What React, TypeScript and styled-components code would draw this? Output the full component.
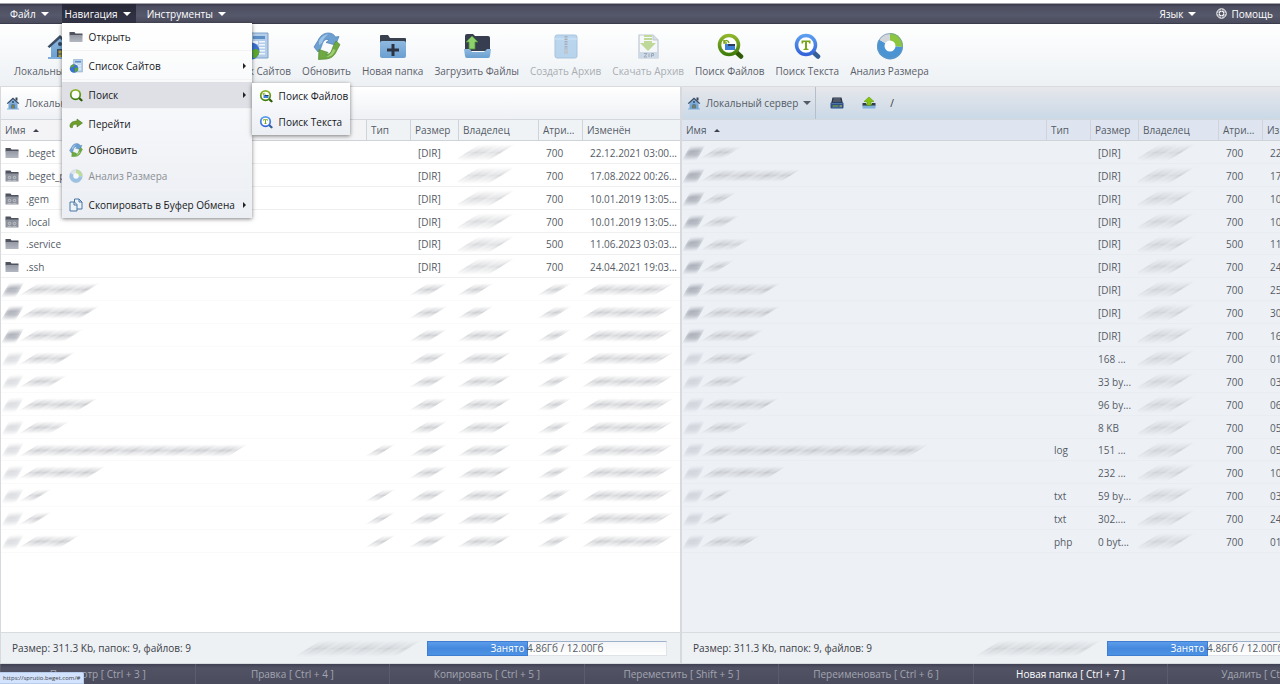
import React from 'react';
import styled, { createGlobalStyle, css } from 'styled-components';

const GlobalStyle = createGlobalStyle`
  *, *::before, *::after { box-sizing: border-box; }
  html, body { margin: 0; padding: 0; }
  body {
    background: #fff;
    font-family: "Open Sans", "Noto Sans", sans-serif;
    font-size: 10px;
    line-height: 14px;
    color: #555b66;
  }
  button {
    font: inherit;
    color: inherit;
    background: none;
    border: 0;
    margin: 0;
    padding: 0;
    cursor: pointer;
  }
  svg { display: block; flex: none; }
`;

/* ---------- page frame ---------- */

const Page = styled.div`
  display: flex;
  flex-direction: column;
  height: 100vh;
  padding-top: 3px;
  overflow: hidden;
`;

const MenuBar = styled.nav`
  display: flex;
  flex: none;
  gap: 8px;
  height: 21px;
  padding: 0 7px;
  border-top: 1px solid #a2a3aa;
  border-bottom: 1px solid #3a3c4c;
  background: linear-gradient(#373949, #4d4f61 15%, #55576a 60%, #4b4d5e);
  color: #fff;
`;

const MenuSlot = styled.div<{ $end?: boolean }>`
  position: relative;
  display: flex;
  margin-left: ${(p) => (p.$end ? 'auto' : '0')};
`;

const MenuButton = styled.button<{ $open?: boolean }>`
  display: flex;
  align-items: center;
  gap: 5px;
  height: 100%;
  padding: 0 5px 0 3px;
  white-space: nowrap;
  background: ${(p) => (p.$open ? 'linear-gradient(#262837, #343648)' : 'none')};
`;

const HelpLink = styled.a`
  display: flex;
  align-items: center;
  gap: 4px;
  margin-left: 7px;
  color: #fff;
  text-decoration: none;
`;

const Caret = styled.span<{ $dir?: 'up' | 'right' }>`
  width: 0;
  height: 0;
  ${(p) =>
    p.$dir === 'right'
      ? css`
          border-top: 3px solid transparent;
          border-bottom: 3px solid transparent;
          border-left: 3px solid #222;
        `
      : p.$dir === 'up'
        ? css`
            border-left: 3px solid transparent;
            border-right: 3px solid transparent;
            border-bottom: 3px solid #3e414d;
          `
        : css`
            border-left: 4px solid transparent;
            border-right: 4px solid transparent;
            border-top: 4px solid currentColor;
          `}
`;

/* ---------- drop-down menus ---------- */

const menuSurface = css`
  position: absolute;
  z-index: 5;
  margin: 0;
  padding: 0;
  list-style: none;
  background: linear-gradient(#fff, #ebeef3);
  box-shadow: 0 1px 4px rgba(0, 0, 0, 0.5);
`;

const Menu = styled.ul`
  ${menuSurface}
  top: 19px;
  left: 0;
  width: 190px;
  padding: 1px 0 0;
`;

const SubMenu = styled.ul`
  ${menuSurface}
  top: 3px;
  left: 100%;
  width: 98px;
`;

const MenuEntry = styled.li<{ $group?: boolean }>`
  position: relative;
  ${(p) => p.$group && 'border-top: 1px solid #f1f3f5; padding-top: 2px;'}
`;

const MenuItem = styled.button<{ $active?: boolean; $muted?: boolean }>`
  display: flex;
  align-items: center;
  gap: 6px;
  width: 100%;
  height: 26px;
  padding: 0 6px 0 7px;
  color: ${(p) => (p.$muted ? '#8b8f95' : '#16181c')};
  background: ${(p) => (p.$active ? '#dfe0e5' : 'none')};
  text-align: left;
  white-space: nowrap;
  > span:last-child { margin-left: auto; }
  > span:nth-child(2) { margin-left: 0; }
`;

const MenuIcon = styled.svg<{ $faded?: boolean }>`
  width: 14px;
  height: 14px;
  opacity: ${(p) => (p.$faded ? 0.5 : 1)};
`;

/* ---------- toolbar ---------- */

const Toolbar = styled.div`
  display: flex;
  flex: none;
  gap: 11px;
  height: 63px;
  padding-left: 14px;
  background: linear-gradient(#fff, #edf1f4);
  border-bottom: 1px solid #d9dbde;
`;

const ServerGroup = styled.div`
  display: flex;
  flex: 0 0 194px;
`;

const Tool = styled.button`
  display: flex;
  flex-direction: column;
  align-items: center;
  gap: 4px;
  padding-top: 8px;
  color: #5b606b;
  white-space: nowrap;
  &:disabled { color: #a9adb3; }
  &:disabled svg { opacity: 0.5; }
`;

const ToolIcon = styled.svg`
  width: 28px;
  height: 28px;
`;

/* ---------- file panes ---------- */

const Workspace = styled.main`
  display: flex;
  flex: 1;
  min-height: 0;
`;

const Pane = styled.section<{ $inactive?: boolean }>`
  display: flex;
  flex: 0 0 53.125%;
  flex-direction: column;
  min-width: 0;
  border-left: ${(p) => (p.$inactive ? '2px' : '1px')} solid #d8d9dc;
  background: ${(p) => (p.$inactive ? '#edf1f6' : '#fff')};
`;

const AddressBar = styled.div<{ $inactive?: boolean }>`
  display: flex;
  flex: none;
  align-items: center;
  height: 33px;
  border-bottom: 1px solid #d4d8dd;
  background: ${(p) =>
    p.$inactive ? 'linear-gradient(#e6e7eb, #cad9e7)' : 'linear-gradient(#fff, #eef1f5)'};
`;

const ServerPicker = styled.button`
  display: flex;
  align-items: center;
  gap: 5px;
  height: 100%;
  padding: 0 4px 0 5px;
  border-right: 1px solid #b5bfca;
  white-space: nowrap;
`;

const AddressActions = styled.div`
  display: flex;
  align-items: center;
  gap: 18px;
  padding-left: 14px;
`;

const PathText = styled.span`
  padding-left: 14px;
  color: #333;
`;

const ListArea = styled.div`
  flex: 1;
  min-height: 0;
  overflow: hidden;
`;

const FileTable = styled.table`
  width: 100%;
  table-layout: fixed;
  border-collapse: separate;
  border-spacing: 0;
`;

const Col = styled.col<{ $w?: number }>`
  width: ${(p) => (p.$w ? `${p.$w}px` : 'auto')};
`;

const HeadCell = styled.th<{ $inactive?: boolean; $sorted?: boolean }>`
  height: 21px;
  padding: 0 0 0 4px;
  border-bottom: 1px solid #d0d4d9;
  border-left: ${(p) => (p.$sorted ? '0' : '1px solid #d0d4d9')};
  background: ${(p) => (p.$inactive ? '#dee5f0' : p.$sorted ? '#f4f4f6' : '#eff3f6')};
  font-weight: 400;
  text-align: left;
  white-space: nowrap;
`;

const SortButton = styled.button`
  display: flex;
  align-items: center;
  gap: 8px;
`;

const Row = styled.tr<{ $line: string }>`
  height: 23px;
  &:nth-child(9n + 5) { height: 22px; }
  > td { border-bottom: 1px solid ${(p) => p.$line}; }
`;

const Cell = styled.td`
  padding: 1px 0 0 8px;
  overflow: hidden;
  white-space: nowrap;
`;

const NameCell = styled.td`
  padding: 1px 0 0 4px;
`;

const NameWrap = styled.div`
  display: flex;
  align-items: center;
  gap: 7px;
`;

const MaskedName = styled.div`
  display: flex;
  align-items: center;
  gap: 8px;
`;

/* Streaked patch that stands in for a hidden value. */
const Smear = styled.span<{ $w: number; $h?: number; $tone?: number }>`
  display: block;
  width: ${(p) => p.$w}px;
  height: ${(p) => p.$h ?? 13}px;
  opacity: ${(p) => p.$tone ?? 0.65};
  background:
    repeating-linear-gradient(90deg, rgba(255, 255, 255, 0.35) 0, rgba(255, 255, 255, 0) 13px, rgba(255, 255, 255, 0.35) 23px),
    repeating-linear-gradient(90deg, #b4b6bb 0, #a4a6ac 3px, #d4d6da 5px, #aeb0b6 7px, #b4b6bb 8px);
  mask-image: linear-gradient(transparent, #000 50%, transparent);
  transform: skewX(-58deg);
  filter: blur(1px);
`;

const IconSmear = styled.span<{ $strong?: boolean }>`
  display: block;
  width: 15px;
  height: 16px;
  opacity: ${(p) => (p.$strong ? 0.8 : 0.35)};
  background: linear-gradient(160deg, #c9cbd1 10%, #8e929e 35%, #b6b9c1 55%, #9a9faa 75%, #d3d5da);
  mask-image: linear-gradient(transparent, #000 40%, #000 60%, transparent);
  transform: skewX(-30deg);
  filter: blur(2px);
`;

/* ---------- status line and function keys ---------- */

const StatusBar = styled.div`
  display: flex;
  flex: none;
  align-items: center;
  gap: 18px;
  height: 32px;
  padding: 0 13px 0 11px;
  border-top: 1px solid #d9dcdf;
  border-bottom: 1px solid #d9dcdf;
  background: #edf1f4;
  color: #3c4048;
`;

const StatusSmear = styled.div`
  margin-left: auto;
`;

const Quota = styled.div`
  position: relative;
  width: 240px;
  height: 15px;
  border: 1px solid #dfe2e6;
  border-top-color: #9fb0cc;
  background: linear-gradient(#f4f5f7, #fff);
`;

const QuotaFill = styled.div`
  height: 100%;
  background: linear-gradient(#5b9bea, #4489de 50%, #4c92e4);
  box-shadow: 0 0 0 1px #3f7dd0;
`;

const QuotaText = styled.div`
  position: absolute;
  inset: 0;
  line-height: 13px;
  text-align: center;
  color: #555b66;
  > b { color: #fff; font-weight: 400; }
`;

const KeyBar = styled.footer`
  display: flex;
  flex: none;
  height: 20px;
  background: linear-gradient(#3f4152, #515365 20%, #4a4c5d);
`;

const KeyButton = styled.button<{ $enabled?: boolean }>`
  flex: 0 0 15.2%;
  border-left: 1px solid #5b5d6d;
  color: ${(p) => (p.$enabled ? '#fff' : '#a3a5b0')};
`;

const LinkPreview = styled.div`
  position: absolute;
  left: 0;
  bottom: 0;
  padding: 0 3px;
  background: #d3e3fd;
  border: 1px solid #b8cdec;
  border-left: 0;
  border-radius: 0 2px 0 0;
  color: #3c4043;
  font-size: 6px;
  line-height: 10px;
`;

/* ---------- icons ---------- */

const Gradients = () => (
  <svg width="0" height="0" style={{ position: 'absolute' }} aria-hidden="true">
    <defs>
      <linearGradient id="g-blue" x1="0" y1="0" x2="0" y2="1">
        <stop offset="0" stopColor="#8fb9e0" />
        <stop offset="1" stopColor="#6a9fd0" />
      </linearGradient>
      <linearGradient id="g-grey" x1="0" y1="0" x2="0" y2="1">
        <stop offset="0" stopColor="#9498a3" />
        <stop offset="1" stopColor="#b3b7c0" />
      </linearGradient>
      <linearGradient id="g-green" x1="0" y1="0" x2="0" y2="1">
        <stop offset="0" stopColor="#8fb52b" />
        <stop offset="1" stopColor="#3f7d0c" />
      </linearGradient>
      <linearGradient id="g-azure" x1="0" y1="0" x2="0" y2="1">
        <stop offset="0" stopColor="#5b9df0" />
        <stop offset="1" stopColor="#3565d8" />
      </linearGradient>
    </defs>
  </svg>
);

const HouseArt = () => (
  <>
    <path d="M19 3h4v6h-4z" fill="#39455a" />
    <path d="M5 13 14 5l9 8v13H5z" fill="url(#g-blue)" />
    <path d="M1.500 14.500 14 3l12.500 11.500-2 1.500L14 6.500 3.500 16z" fill="#3b4d66" />
    <path d="M11 17h6v9h-6z" fill="#3c5068" />
    <path d="M12.500 18.500h3v3h-3zM12.500 22.500h3v3h-3z" fill="#b9a33a" />
    <circle cx="14" cy="12" r="2" fill="#34465f" />
    <path d="M2 25h24v2H2z" fill="#7fb0dd" />
  </>
);

const SitesArt = () => (
  <>
    <path d="M9 1h18v25H9z" fill="#b4cde8" stroke="#7ea2c8" />
    <path d="M12 4h12v3H12z" fill="#5d8fc7" />
    <path d="M12 9h5v3h-5zM18 9h6v1.500h-6zM18 12h6v1.500h-6zM12 14h5v3h-5zM18 15h6v1.500h-6zM18 18h6v1.500h-6zM18 21h6v1.500h-6z" fill="#eef5fc" />
    <circle cx="10" cy="19" r="8.500" fill="#3b72cf" />
    <path d="M4 14c4-4 6-3 7-2s-2 4-4 4-3 3-4 2zM11 19c3-3 6-2 7 0s-2 7-5 7 0-4-2-7z" fill="#5fa82b" />
  </>
);

/* Two folded arrows that chase each other round an open centre. */
const RefreshArt = () => (
  <>
    <path
      d="M1 15 5 8.500C7 4 10.500 1 15.500 1c3 0 5.500 1.500 7 4l3.500-.5L22.500 13 13 10.500l3-2.500c-3-1.500-5 0-6.500 3.500L7.500 17 5 20z"
      fill="#6d9fd1"
      stroke="#4c80b5"
      strokeWidth=".7"
    />
    <path
      d="M27 12.500 23.500 19C21.500 24 18 26.500 13 27l-7.500.5L6 17.500l9 3-2 2c3 0 5-1.500 6-5l1.500-4L23 9z"
      fill="#6fa843"
      stroke="#4f8a2d"
      strokeWidth=".7"
    />
    <path d="M6 9c2-4 5-6.500 9-6.500-3 2-5 5-6 8.500L6 13z" fill="#9cc3e8" />
    <path d="M22.500 18c-2 5-5 7-9 7 3-1.500 5.500-4.500 6.500-8z" fill="#a0cf72" />
  </>
);

const NewFolderArt = () => (
  <>
    <path d="M1 4q0-1 1-1h7l2 3h15q1 0 1 1v9H1z" fill="#39414f" />
    <path d="M1 11q0-2 2-2h22q2 0 2 2v13q0 2-2 2H3q-2 0-2-2z" fill="url(#g-blue)" />
    <path d="M12.500 12h3v4.500H20v3h-4.500V24h-3v-4.500H8v-3h4.500z" fill="#2c3443" />
  </>
);

const UploadArt = () => (
  <>
    <path d="M2 4q0-2 2-2h6l2 2h13q2 0 2 2v13H2z" fill="#363e50" />
    <path d="M1 17h6l2 3h12l3-3h4l-1 7q0 2-2 2H4q-2 0-2-2z" fill="url(#g-blue)" />
    <path d="M9 4l6 6h-3v7H6v-7H3z" fill="#8ed16c" stroke="#4f8e3a" strokeWidth=".8" />
  </>
);

const ArchiveArt = () => (
  <>
    <rect x="3" y="3" width="22" height="23" rx="2" fill="#7bb2e2" stroke="#5c8fc0" />
    <path d="M3 7h22" stroke="#a9d0f0" />
    <path d="M14 4v18" stroke="#5b6470" strokeWidth="3" strokeDasharray="1.500 1" />
    <path d="M12.500 17h3v5h-3z" fill="#8a95a3" />
  </>
);

const DownloadArt = () => (
  <>
    <path d="M5 3h14l5 5v18H5z" fill="#f2f5f8" stroke="#8795ab" strokeWidth="1.200" />
    <path d="M19 3v5h5" fill="#b9c4d4" stroke="#8795ab" />
    <path d="M10 3h8v2h-8zM10 6h8v2h-8zM10 9h8v2h4l-8 8-8-8h4z" fill="#85b83c" />
    <path d="M5 20h19v6H5z" fill="#a3bcd8" />
    <path d="M10 21.500h3L10 25h3M15 21.500V25M17.500 25v-3.500h2V23.500h-2" fill="none" stroke="#4c5a6e" />
  </>
);

const LensArt = ({ blue, children }: { blue?: boolean; children?: React.ReactNode }) => (
  <>
    <path d="M19 19l6 5.500" stroke={blue ? '#365f96' : '#2f5a06'} strokeWidth="4.500" strokeLinecap="round" />
    <circle
      cx="13"
      cy="13"
      r="9.500"
      fill="#fff"
      stroke={blue ? 'url(#g-azure)' : 'url(#g-green)'}
      strokeWidth="3.500"
    />
    {children}
  </>
);

const FileLensArt = () => (
  <LensArt>
    <path d="M9 12h4l1 1h5v5H9z" fill="#3d7fd6" />
    <path d="M12 12h7v2h-7z" fill="#2a3b5c" />
    <path d="M8 10c2-2 4-2 5 1M8 8v3h3" fill="none" stroke="#7aa61c" strokeWidth="1.500" />
  </LensArt>
);

const TextLensArt = () => (
  <LensArt blue>
    <path d="M8.500 8.500h9v3H16l-.5-1.500H14v6.500l1.500.5v1h-5v-1l1.500-.5V10h-1.500l-.5 1.500H8.500z" fill="#79a51e" />
  </LensArt>
);

const PieArt = () => (
  <>
    <path d="M14 14V1a13 13 0 0 1 13 14z" fill="#8cc63f" />
    <path d="M14 14 27 15A13 13 0 1 1 3 7.500z" fill="#4a94d3" />
    <path d="M14 14 3 7.500A13 13 0 0 1 14 1z" fill="#d3d7db" />
    <circle cx="14" cy="14" r="12.500" fill="none" stroke="#6c96b8" strokeWidth=".7" />
    <circle cx="14" cy="14" r="5.500" fill="#fff" />
  </>
);

const FolderArt = () => (
  <>
    <path d="M1 4h10l2 3h14v4H1z" fill="#4e535f" />
    <path d="M1 10h26v14H1z" fill="url(#g-grey)" />
  </>
);

const SharedFolderArt = () => (
  <>
    <path d="M1 3h10l2 3h14v5H1z" fill="#4e535f" />
    <path d="M1 9h26v16H1z" fill="#8c919b" />
    <circle cx="9" cy="17" r="2.500" fill="none" stroke="#d0d4da" strokeWidth="1.500" />
    <circle cx="19" cy="17" r="2.500" fill="none" stroke="#d0d4da" strokeWidth="1.500" />
    <path d="M5 23h8M15 23h8" stroke="#c3c7ce" strokeWidth="1.500" />
  </>
);

const GoArt = () => (
  <path d="M2 20c-1-8 5-12 14-12V4l11 8-11 8v-5c-5-1-9 0-9 6-2 1-4 0-5-1z" fill="#6f9e2c" stroke="#3f6e12" />
);

const CopyArt = () => (
  <g fill="#eef3f8" stroke="#4a76a5" strokeWidth="2">
    <path d="M11 2h9l6 6v14H11z" />
    <path d="M2 8h9l5 5v13H2z" />
    <path d="M20 2v6h6M10 8v6h6" fill="none" />
  </g>
);

const DriveArt = () => (
  <>
    <path d="M5 3h18l3 13H2z" fill="#2a3140" />
    <path d="M7 6h14M6 10h16" stroke="#77839a" strokeWidth="2" />
    <rect x="1" y="13" width="26" height="12" rx="2" fill="#2f5085" />
    <path d="M5 20h12" stroke="#8eb53a" strokeWidth="2" />
    <path d="M19 20h5" stroke="#e0d45a" strokeWidth="2" />
    <path d="M3 15h22M4 24h20" stroke="#6f9bd0" />
  </>
);

const UpArt = () => (
  <>
    <path d="M1 14h7l1 3h10l1-3h7v6H1z" fill="#343c4c" />
    <path d="M1 19h26v6H1z" fill="#7fb0de" />
    <path d="M14 2l10 9h-6v8h-8v-8H4z" fill="#85c60c" stroke="#4f8a06" />
  </>
);

const LifeRing = () => (
  <svg width="11" height="11" viewBox="0 0 22 22" fill="none" stroke="#fff">
    <circle cx="11" cy="11" r="9.500" strokeWidth="2" />
    <circle cx="11" cy="11" r="4.500" strokeWidth="2" />
    <path d="M8 2v6M14 2v6M8 14v6M14 14v6M2 8h6M2 14h6M14 8h6M14 14h6" strokeWidth="1.500" />
  </svg>
);

/* ---------- data ---------- */

const tools = [
  { label: 'Список Сайтов', Art: SitesArt },
  { label: 'Обновить', Art: RefreshArt },
  { label: 'Новая папка', Art: NewFolderArt },
  { label: 'Загрузить Файлы', Art: UploadArt },
  { label: 'Создать Архив', Art: ArchiveArt, off: true },
  { label: 'Скачать Архив', Art: DownloadArt, off: true },
  { label: 'Поиск Файлов', Art: FileLensArt },
  { label: 'Поиск Текста', Art: TextLensArt },
  { label: 'Анализ Размера', Art: PieArt },
];

type FileRow = {
  name?: string;
  shared?: boolean;
  nameWidth: number;
  folder?: boolean;
  type?: string;
  size: string;
  attr: string;
  date?: string;
  day: string;
};

const files: FileRow[] = [
  { name: '.beget', nameWidth: 24, folder: true, size: '[DIR]', attr: '700', date: '22.12.2021 03:00...', day: '22' },
  { name: '.beget_p', shared: true, nameWidth: 82, folder: true, size: '[DIR]', attr: '700', date: '17.08.2022 00:26...', day: '17' },
  { name: '.gem', shared: true, nameWidth: 18, folder: true, size: '[DIR]', attr: '700', date: '10.01.2019 13:05...', day: '10' },
  { name: '.local', shared: true, nameWidth: 22, folder: true, size: '[DIR]', attr: '700', date: '10.01.2019 13:05...', day: '10' },
  { name: '.service', nameWidth: 32, folder: true, size: '[DIR]', attr: '500', date: '11.06.2023 03:03...', day: '11' },
  { name: '.ssh', nameWidth: 16, folder: true, size: '[DIR]', attr: '700', date: '24.04.2021 19:03...', day: '24' },
  { nameWidth: 62, folder: true, size: '[DIR]', attr: '700', day: '25' },
  { nameWidth: 62, folder: true, size: '[DIR]', attr: '700', day: '30' },
  { nameWidth: 46, folder: true, size: '[DIR]', attr: '700', day: '16' },
  { nameWidth: 38, size: '168 ...', attr: '700', day: '01' },
  { nameWidth: 30, size: '33 by...', attr: '700', day: '03' },
  { nameWidth: 60, size: '96 by...', attr: '700', day: '06' },
  { nameWidth: 32, size: '8 KB', attr: '700', day: '05' },
  { nameWidth: 210, type: 'log', size: '151 ...', attr: '700', day: '05' },
  { nameWidth: 68, size: '232 ...', attr: '700', day: '10' },
  { nameWidth: 14, type: 'txt', size: '59 by...', attr: '700', day: '03' },
  { nameWidth: 14, type: 'txt', size: '302....', attr: '700', day: '24' },
  { nameWidth: 42, type: 'php', size: '0 byt...', attr: '700', day: '01' },
];

const keys = [
  'Просмотр [ Ctrl + 3 ]',
  'Правка [ Ctrl + 4 ]',
  'Копировать [ Ctrl + 5 ]',
  'Переместить [ Shift + 5 ]',
  'Переименовать [ Ctrl + 6 ]',
  'Новая папка [ Ctrl + 7 ]',
  'Удалить [ Ctrl + 8 ]',
];

/* ---------- components ---------- */

type Art = () => React.JSX.Element;

const SmallIcon = ({ art: A, faded }: { art: Art; faded?: boolean }) => (
  <MenuIcon viewBox="0 0 28 28" $faded={faded} aria-hidden="true">
    <A />
  </MenuIcon>
);

const Entry = (props: {
  art: Art;
  label: string;
  group?: boolean;
  arrow?: boolean;
  active?: boolean;
  muted?: boolean;
  children?: React.ReactNode;
}) => (
  <MenuEntry $group={props.group}>
    <MenuItem $active={props.active} $muted={props.muted} disabled={props.muted}>
      <SmallIcon art={props.art} faded={props.muted} />
      <span>{props.label}</span>
      {props.arrow && <Caret $dir="right" />}
    </MenuItem>
    {props.children}
  </MenuEntry>
);

const ToolButton = ({ label, art: A, off }: { label: string; art: Art; off?: boolean }) => (
  <Tool disabled={off}>
    <ToolIcon viewBox="0 0 28 28" aria-hidden="true">
      <A />
    </ToolIcon>
    {label}
  </Tool>
);

const FilePane = ({ inactive }: { inactive?: boolean }) => (
  <Pane $inactive={inactive}>
    <AddressBar $inactive={inactive}>
      <ServerPicker>
        <SmallIcon art={HouseArt} />
        Локальный сервер
        <Caret />
      </ServerPicker>
      <AddressActions>
        <button aria-label="Диск">
          <SmallIcon art={DriveArt} />
        </button>
        <button aria-label="Вверх">
          <SmallIcon art={UpArt} />
        </button>
      </AddressActions>
      <PathText>/</PathText>
    </AddressBar>
    <ListArea>
      <FileTable>
        <colgroup>
          <Col />
          <Col $w={44} />
          <Col $w={48} />
          <Col $w={80} />
          <Col $w={44} />
          <Col $w={98} />
        </colgroup>
        <thead>
          <tr>
            <HeadCell $inactive={inactive} $sorted>
              <SortButton>
                Имя
                <Caret $dir="up" />
              </SortButton>
            </HeadCell>
            {['Тип', 'Размер', 'Владелец', 'Атри...', 'Изменён'].map((title) => (
              <HeadCell key={title} $inactive={inactive}>
                {title}
              </HeadCell>
            ))}
          </tr>
        </thead>
        <tbody>
          {files.map((file, i) => {
            const open = !inactive && !!file.name;
            const plain = open || inactive;
            return (
              <Row key={i} $line={inactive ? '#e9edf1' : open ? '#eeeff0' : '#fafafa'}>
                <NameCell>
                  {open ? (
                    <NameWrap>
                      <SmallIcon art={file.shared ? SharedFolderArt : FolderArt} />
                      {file.name}
                    </NameWrap>
                  ) : (
                    <MaskedName>
                      <IconSmear $strong={file.folder} />
                      <Smear $w={file.nameWidth} />
                    </MaskedName>
                  )}
                </NameCell>
                <Cell>{plain ? file.type : file.type && <Smear $w={12} />}</Cell>
                <Cell>{plain ? file.size : <Smear $w={20} />}</Cell>
                <Cell>
                  <Smear $w={plain ? 36 : i < 8 ? 18 : 36} $h={plain ? 17 : 13} $tone={plain ? 0.5 : 0.65} />
                </Cell>
                <Cell>{plain ? file.attr : <Smear $w={16} />}</Cell>
                <Cell>{inactive ? file.day : open ? file.date : <Smear $w={74} />}</Cell>
              </Row>
            );
          })}
        </tbody>
      </FileTable>
    </ListArea>
    <StatusBar>
      Размер: 311.3 Kb, папок: 9, файлов: 9
      <StatusSmear>
        <Smear $w={102} $h={17} $tone={0.5} />
      </StatusSmear>
      <Quota role="progressbar" aria-label="Занято" aria-valuenow={41}>
        <QuotaFill style={{ width: '41.500%' }} />
        <QuotaText>
          <b>Занято</b> 4.86Гб / 12.00Гб
        </QuotaText>
      </Quota>
    </StatusBar>
  </Pane>
);

export default function App() {
  return (
    <Page>
      <GlobalStyle />
      <Gradients />
      <MenuBar>
        <MenuSlot>
          <MenuButton>
            Файл <Caret />
          </MenuButton>
        </MenuSlot>
        <MenuSlot>
          <MenuButton $open aria-expanded="true">
            Навигация <Caret />
          </MenuButton>
          <Menu>
            <Entry art={FolderArt} label="Открыть" />
            <Entry art={SitesArt} label="Список Сайтов" group arrow />
            <Entry art={LensArt} label="Поиск" group arrow active>
              <SubMenu>
                <Entry art={FileLensArt} label="Поиск Файлов" />
                <Entry art={TextLensArt} label="Поиск Текста" />
              </SubMenu>
            </Entry>
            <Entry art={GoArt} label="Перейти" group />
            <Entry art={RefreshArt} label="Обновить" />
            <Entry art={PieArt} label="Анализ Размера" muted />
            <Entry art={CopyArt} label="Скопировать в Буфер Обмена" group arrow />
          </Menu>
        </MenuSlot>
        <MenuSlot>
          <MenuButton>
            Инструменты <Caret />
          </MenuButton>
        </MenuSlot>
        <MenuSlot $end>
          <MenuButton>
            Язык <Caret />
          </MenuButton>
        </MenuSlot>
        <HelpLink href="#help">
          <LifeRing />
          Помощь
        </HelpLink>
      </MenuBar>
      <Toolbar>
        <ServerGroup>
          <ToolButton label="Локальный сервер" art={HouseArt} />
        </ServerGroup>
        {tools.map((t) => (
          <ToolButton key={t.label} label={t.label} art={t.Art} off={t.off} />
        ))}
      </Toolbar>
      <Workspace>
        <FilePane />
        <FilePane inactive />
      </Workspace>
      <KeyBar>
        {keys.map((label, i) => (
          <KeyButton key={label} $enabled={i === 5}>
            {label}
          </KeyButton>
        ))}
      </KeyBar>
      <LinkPreview>https://sprutio.beget.com/#</LinkPreview>
    </Page>
  );
}
